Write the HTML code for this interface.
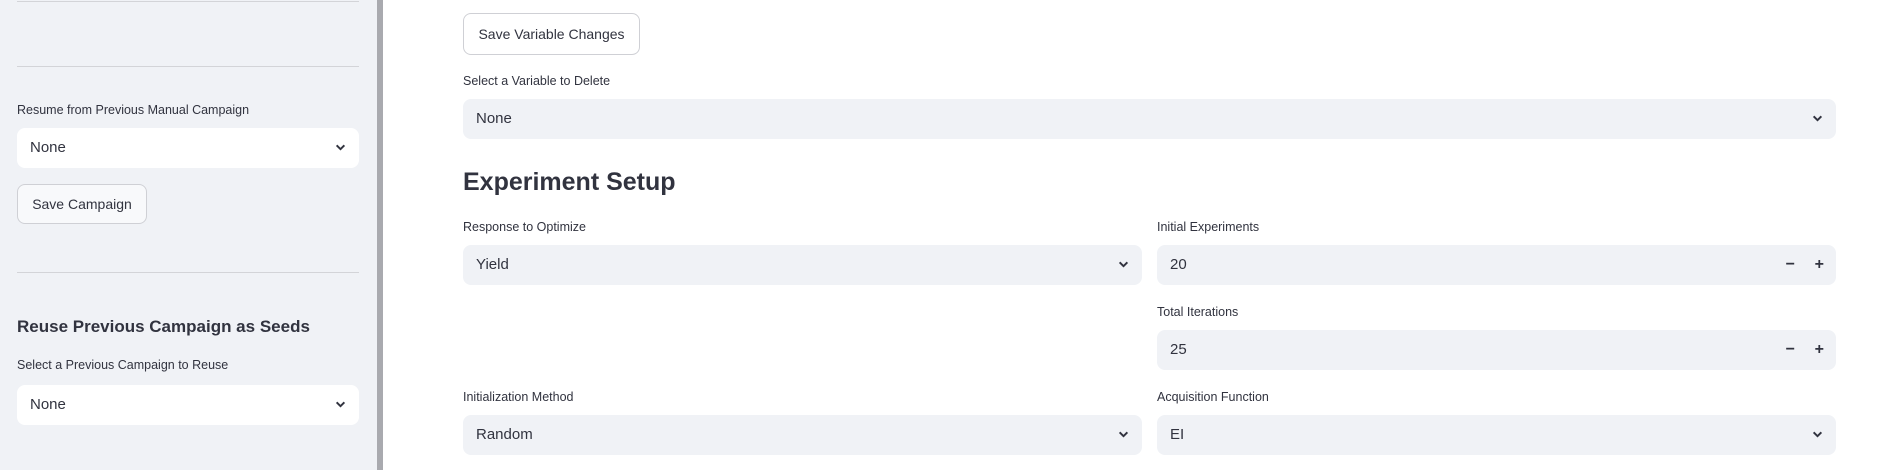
<!DOCTYPE html>
<html><head><meta charset="utf-8"><style>
*{box-sizing:border-box;margin:0;padding:0}
body{width:1891px;height:470px;overflow:hidden;background:#fff;font-family:"Liberation Sans",sans-serif;color:#31333f;position:relative}
.sb{position:absolute;left:0;top:0;width:377px;height:470px;background:#f0f2f6}
.bar{position:absolute;left:377px;top:0;width:6px;height:470px;background:#a9aaaf}
.a{position:absolute}
.hr{position:absolute;height:1px;background:#d3d4d8}
.lbl{position:absolute;font-size:12.5px;color:#31333f;white-space:nowrap}
.sel{position:absolute;height:40px;border-radius:8px;background:#f0f2f6;font-size:15px;line-height:40px;padding-left:13px}
.sel.w{background:#fff}
.chev{position:absolute;right:13px;top:14px;width:11px;height:11px}
.btn{position:absolute;border:1px solid #cfd0d5;border-radius:8px;background:#fff;font-size:14px;text-align:center}
.sb .btn{background:#f8f9fb}
.pm{position:absolute;top:0;font-size:16px;font-weight:bold}
</style></head><body>
<div class="sb">
 <div class="hr" style="left:17px;width:342px;top:1px"></div>
 <div class="hr" style="left:17px;width:342px;top:66px"></div>
 <div class="lbl" style="left:17px;top:103px">Resume from Previous Manual Campaign</div>
 <div class="sel w" style="left:17px;top:128px;width:342px">None<svg class="chev" viewBox="0 0 10 10"><path d="M1.5 3L5 6.5L8.5 3" stroke="#31333f" stroke-width="1.8" fill="none"/></svg></div>
 <div class="btn" style="left:17px;top:184px;width:130px;height:40px;line-height:38px">Save Campaign</div>
 <div class="hr" style="left:17px;width:342px;top:272px"></div>
 <div class="a" style="left:17px;top:317px;font-size:17px;font-weight:bold">Reuse Previous Campaign as Seeds</div>
 <div class="lbl" style="left:17px;top:358px">Select a Previous Campaign to Reuse</div>
 <div class="sel w" style="left:17px;top:385px;width:342px">None<svg class="chev" viewBox="0 0 10 10"><path d="M1.5 3L5 6.5L8.5 3" stroke="#31333f" stroke-width="1.8" fill="none"/></svg></div>
</div>
<div class="bar"></div>

<div class="btn" style="left:463px;top:13px;width:177px;height:42px;line-height:40px">Save Variable Changes</div>
<div class="lbl" style="left:463px;top:74px">Select a Variable to Delete</div>
<div class="sel" style="left:463px;top:99px;width:1373px">None<svg class="chev" viewBox="0 0 10 10"><path d="M1.5 3L5 6.5L8.5 3" stroke="#31333f" stroke-width="1.8" fill="none"/></svg></div>
<div class="a" style="left:463px;top:168px;font-size:25px;font-weight:bold">Experiment Setup</div>

<div class="lbl" style="left:463px;top:220px">Response to Optimize</div>
<div class="sel" style="left:463px;top:245px;width:679px">Yield<svg class="chev" viewBox="0 0 10 10"><path d="M1.5 3L5 6.5L8.5 3" stroke="#31333f" stroke-width="1.8" fill="none"/></svg></div>

<div class="lbl" style="left:1157px;top:220px">Initial Experiments</div>
<div class="sel" style="left:1157px;top:245px;width:679px">20<span class="pm" style="right:41px">−</span><span class="pm" style="right:12px">+</span></div>

<div class="lbl" style="left:1157px;top:305px">Total Iterations</div>
<div class="sel" style="left:1157px;top:330px;width:679px">25<span class="pm" style="right:41px">−</span><span class="pm" style="right:12px">+</span></div>

<div class="lbl" style="left:463px;top:390px">Initialization Method</div>
<div class="sel" style="left:463px;top:415px;width:679px">Random<svg class="chev" viewBox="0 0 10 10"><path d="M1.5 3L5 6.5L8.5 3" stroke="#31333f" stroke-width="1.8" fill="none"/></svg></div>

<div class="lbl" style="left:1157px;top:390px">Acquisition Function</div>
<div class="sel" style="left:1157px;top:415px;width:679px">EI<svg class="chev" viewBox="0 0 10 10"><path d="M1.5 3L5 6.5L8.5 3" stroke="#31333f" stroke-width="1.8" fill="none"/></svg></div>
</body></html>
